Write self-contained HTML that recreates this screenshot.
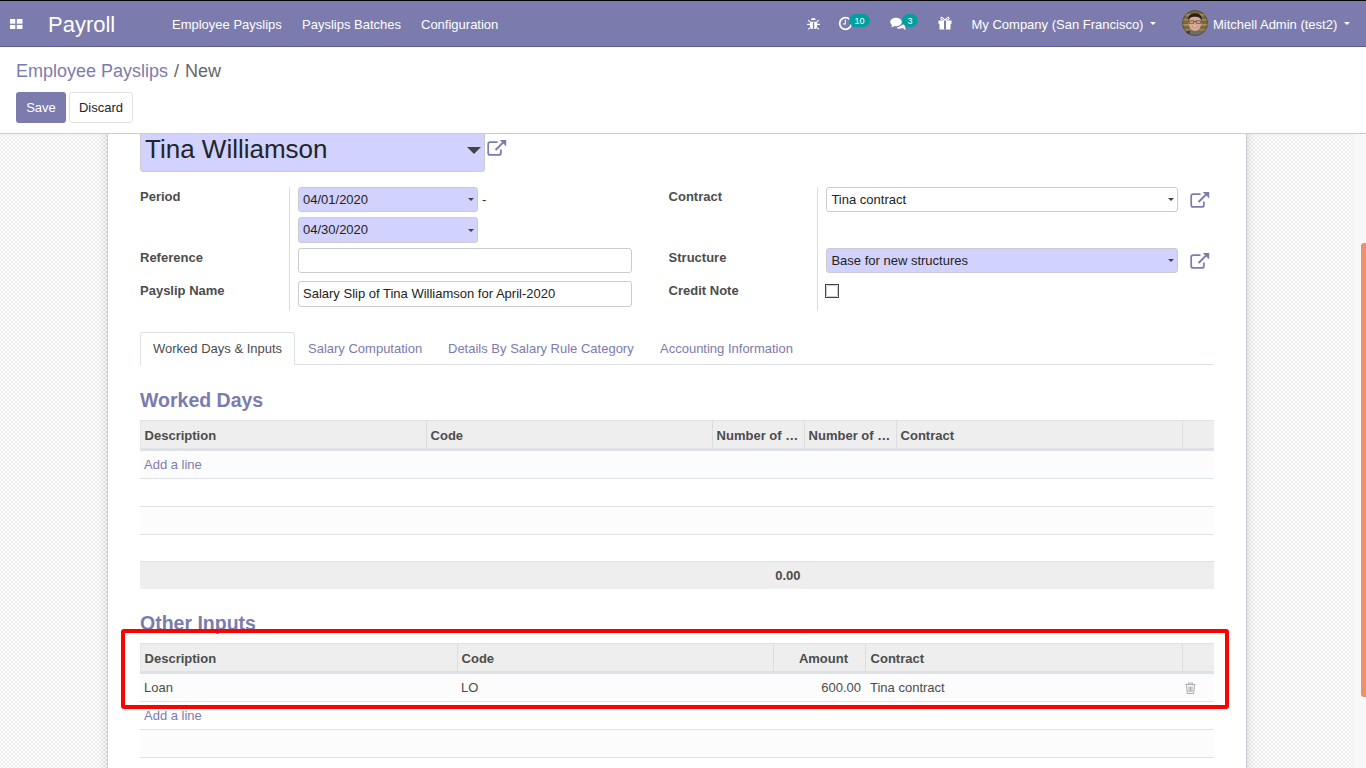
<!DOCTYPE html>
<html><head><meta charset="utf-8">
<style>
*{box-sizing:border-box;margin:0;padding:0}
html,body{width:1366px;height:768px;overflow:hidden;font-family:"Liberation Sans",sans-serif;font-size:13px;color:#4c4c4c;background:#fff}
.abs{position:absolute}
#topline{left:0;top:0;width:1366px;height:1px;background:#000}
#nav{left:0;top:1px;width:1366px;height:46px;background:#7c7bad;border-bottom:1px solid #5f5e97;color:#fff}
#nav .t{position:absolute;white-space:nowrap;color:#fff}
#cp{left:0;top:47px;width:1366px;height:87px;background:#fff;border-bottom:1px solid #ccc}
#content{left:0;top:0;width:1354px;height:768px;clip-path:inset(134px 0 0 0);background-color:#f4f4f4;
 background-image:repeating-conic-gradient(#ebebeb 0 25%, #fefefe 0 50%);background-size:4px 4px;background-position:1px 1px;overflow:hidden}
#scroll{left:1354px;top:134px;width:12px;height:634px;background:#f8f8f8}
#thumb{left:1361px;top:243px;width:5px;height:454px;background:#f0906a;border-radius:3px 0 0 3px}
#sheet{left:107px;top:0;width:1140px;height:900px;box-shadow:0 0 10px rgba(0,0,0,0.12);background:#fff;border-left:1px solid #cbcbd6;border-right:1px solid #cbcbd6}
.lbl{position:absolute;font-weight:bold;color:#4c4c4c;white-space:nowrap}
.inp{position:absolute;border:1px solid #ccc;border-radius:3px;background:#fff;color:#222;padding-left:4px;white-space:nowrap;overflow:hidden}
.req{background:#d2d2ff}
.vsep{position:absolute;width:1px;background:#ddd}
.caret{position:absolute;width:0;height:0;border-left:3px solid transparent;border-right:3px solid transparent;border-top:3px solid #444}
.ext{position:absolute}
.tab{position:absolute;white-space:nowrap;color:#7c7bad}
h2.sec{position:absolute;font-size:19.5px;font-weight:bold;color:#7c7bad;white-space:nowrap}
.tbl{position:absolute}
.th{position:absolute;background:#eee;border-bottom:3px solid #dee2e6;border-left:1px solid #e6e8ea}
.thc{position:absolute;font-weight:bold;white-space:nowrap;color:#4c4c4c;margin-left:0.6px}
.tcol{position:absolute;width:1px;background:#ddd}
.row{position:absolute;border-bottom:1px solid #dee2e6}
.odd{background:#fcfcfc}
.link{color:#7c7bad}
</style></head><body>
<div id="topline" class="abs"></div>
<div id="nav" class="abs">
  <svg class="abs" style="left:10px;top:17.8px" width="12.5" height="10.6" viewBox="0 0 12.5 10.6"><rect x="0" y="0" width="5.3" height="4.7" fill="#fff"/><rect x="6.8" y="0" width="5.7" height="4.7" fill="#fff"/><rect x="0" y="5.9" width="5.3" height="4.7" fill="#fff"/><rect x="6.8" y="5.9" width="5.7" height="4.7" fill="#fff"/></svg>
  <div class="t" style="left:48px;top:11px;font-size:22px">Payroll</div>
  <div class="t" style="left:172px;top:16px;font-size:13px">Employee Payslips</div>
  <div class="t" style="left:302px;top:16px;font-size:13px">Payslips Batches</div>
  <div class="t" style="left:421px;top:16px;font-size:13px">Configuration</div>
  <!-- bug -->
  <svg class="abs" style="left:807px;top:16px" width="13" height="14" viewBox="0 0 13 14">
    <path d="M4 3Q4 0.9 6.35 0.9Q8.7 0.9 8.7 3Z" fill="#fff"/>
    <path d="M3 4.8H10V9.5Q10 12.1 6.5 12.1Q3 12.1 3 9.5Z" fill="#fff"/>
    <rect x="5.9" y="5.3" width="1.3" height="7" fill="#7c7bad"/>
    <path d="M1.2 3.2L3.2 4.9M11.8 3.2L9.8 4.9M0.1 7.4H3M12.9 7.4H10M1.2 12.3L3.2 10.9M11.8 12.3L9.8 10.9" stroke="#fff" stroke-width="1.1"/>
  </svg>
  <!-- clock -->
  <svg class="abs" style="left:838px;top:15px" width="15" height="15" viewBox="0 0 15 15">
    <circle cx="7.5" cy="7.5" r="5.8" fill="none" stroke="#fff" stroke-width="1.7"/>
    <path d="M7.3 3.8V8H4.8" fill="none" stroke="#fff" stroke-width="1.1"/>
  </svg>
  <div class="abs" style="left:849px;top:13px;width:21px;height:13px;border-radius:7px;background:#00a09d;color:#fff;font-size:9px;line-height:14px;text-align:center">10</div>
  <!-- comments -->
  <svg class="abs" style="left:890px;top:16px" width="16" height="14" viewBox="0 0 16 14">
    <ellipse cx="6" cy="5" rx="5.8" ry="4.2" fill="#fff"/>
    <path d="M2 7.5L1.5 10.5L5.5 8.5Z" fill="#fff"/>
    <path d="M7 11Q10.5 11.5 13 10.5L15 12.5L14.5 9.5Q15.8 8 15.3 6.3" fill="#fff" stroke="#fff" stroke-width="1"/>
  </svg>
  <div class="abs" style="left:902px;top:13px;width:16px;height:13px;border-radius:7px;background:#00a09d;color:#fff;font-size:9px;line-height:14px;text-align:center">3</div>
  <!-- gift -->
  <svg class="abs" style="left:938px;top:15px" width="14" height="14" viewBox="0 0 14 14">
    <path d="M7 4.5Q4 0 3 2Q2.3 4 7 4.5Q11.7 4 11 2Q10 0 7 4.5" fill="none" stroke="#fff" stroke-width="1.1"/>
    <rect x="0.5" y="4.5" width="13" height="3.5" fill="#fff"/>
    <rect x="1.5" y="8" width="11" height="5.5" fill="#fff"/>
    <rect x="6" y="4.5" width="2" height="9" fill="#7c7bad"/>
  </svg>
  <div class="abs" style="left:1150px;top:21px;width:0;height:0;border-left:3px solid transparent;border-right:3px solid transparent;border-top:3.5px solid #fff"></div>
  <!-- avatar -->
  <svg class="abs" style="left:1182px;top:9px" width="26" height="26" viewBox="0 0 26 26">
    <defs><clipPath id="av"><circle cx="13" cy="13" r="12.8"/></clipPath></defs>
    <g clip-path="url(#av)">
      <rect width="26" height="26" fill="#7a6840"/>
      <rect x="0" y="4" width="26" height="1.6" fill="#a8935e"/>
      <rect x="0" y="9" width="26" height="1.6" fill="#9c8753"/>
      <rect x="0" y="14" width="26" height="1.6" fill="#a8935e"/>
      <rect x="0" y="19" width="26" height="1.6" fill="#9c8753"/>
      <path d="M2 26Q3 19.5 12.5 20Q22 19.5 24 26Z" fill="#6a6d68"/>
      <path d="M2 26Q3 21 8 20.5L7.5 26Z" fill="#4a3a2c"/>
      <ellipse cx="13" cy="13" rx="6.3" ry="8" fill="#d9a88f"/>
      <path d="M6.3 11Q5.5 3 13 3.2Q20.5 3 19.7 11Q18.5 6.5 13 6.8Q7.5 6.5 6.3 11Z" fill="#2a201a"/>
      <path d="M7.3 10.8H11.8V13.3H7.3ZM14.2 10.8H18.7V13.3H14.2ZM11.8 11.4H14.2" fill="none" stroke="#3a3030" stroke-width="0.6"/>
      <path d="M10.3 16.3Q13 18.5 15.7 16.3Z" fill="#f4eeee"/>
      <path d="M10.1 16.1Q13 19 15.9 16.1" fill="none" stroke="#a85c55" stroke-width="0.6"/>
    </g>
    <circle cx="13" cy="13" r="12.5" fill="none" stroke="#3d3020" stroke-width="0.8" opacity="0.6"/>
  </svg>
  <div class="abs" style="left:1344px;top:21px;width:0;height:0;border-left:3px solid transparent;border-right:3px solid transparent;border-top:3.5px solid #fff"></div>
  <div class="t" style="left:971.5px;top:16px;font-size:13px">My Company (San Francisco)</div>
  <div class="t" style="left:1213px;top:16px;font-size:13px">Mitchell Admin (test2)</div>
</div>
<div id="cp" class="abs">
  <div class="abs" style="left:16px;top:14px;font-size:18px;white-space:nowrap"><span style="color:#7c7bad">Employee Payslips</span><span style="color:#666;padding-left:1px"> /</span><span style="color:#666;padding-left:1px"> New</span></div>
  <div class="abs" style="left:16px;top:45px;width:50px;height:31px;background:#7c7bad;border-radius:3px;color:#fff;text-align:center;line-height:31px">Save</div>
  <div class="abs" style="left:69px;top:45px;width:64px;height:31px;background:#fff;border:1px solid #dee2e6;border-radius:3px;color:#212529;text-align:center;line-height:29px">Discard</div>
</div>
<div id="content" class="abs">
  <div id="sheet" class="abs"></div>
  <!-- name field -->
  <div class="inp req" style="left:140px;top:120px;width:345px;height:52px;font-size:26px;line-height:56px;padding-left:4px;color:#212529">Tina Williamson</div>
  <div class="caret" style="left:467px;top:147px;border-left-width:7px;border-right-width:7px;border-top-width:7px;border-top-color:#444"></div>
  <svg class="ext" style="left:487px;top:140px" width="20" height="16" viewBox="0 0 20 16"><path d="M10.5 2.2H3.2Q1.2 2.2 1.2 4.2V12.9Q1.2 14.9 3.2 14.9H11.9Q13.9 14.9 13.9 12.9V9.5" fill="none" stroke="#7c7bad" stroke-width="1.7"/><path d="M8.6 10L16.2 2.4" stroke="#7c7bad" stroke-width="2"/><path d="M12.6 -0.2H19.2V6.6Z" fill="#7c7bad"/></svg>

  <!-- left group -->
  <div class="lbl" style="left:140px;top:189px">Period</div>
  <div class="lbl" style="left:140px;top:250px">Reference</div>
  <div class="lbl" style="left:140px;top:283px">Payslip Name</div>
  <div class="vsep" style="left:289px;top:187px;height:124px"></div>
  <div class="inp req" style="left:298px;top:187px;width:180px;height:25px;line-height:23px">04/01/2020</div>
  <div class="caret" style="left:468px;top:198px"></div>
  <div class="abs" style="left:482px;top:192px;color:#333">-</div>
  <div class="inp req" style="left:298px;top:217px;width:180px;height:26px;line-height:23px">04/30/2020</div>
  <div class="caret" style="left:468px;top:229px"></div>
  <div class="inp" style="left:298px;top:248px;width:334px;height:25px"></div>
  <div class="inp" style="left:298px;top:281px;width:334px;height:26px;line-height:24px">Salary Slip of Tina Williamson for April-2020</div>

  <!-- right group -->
  <div class="lbl" style="left:668.6px;top:189px">Contract</div>
  <div class="lbl" style="left:668.6px;top:250px">Structure</div>
  <div class="lbl" style="left:668.6px;top:283px">Credit Note</div>
  <div class="vsep" style="left:817px;top:187px;height:124px"></div>
  <div class="inp" style="left:826px;top:187px;width:352px;height:25px;line-height:23px;padding-left:4.4px">Tina contract</div>
  <div class="caret" style="left:1168px;top:198px"></div>
  <svg class="ext" style="left:1190px;top:192px" width="20" height="16" viewBox="0 0 20 16"><path d="M10.5 2.2H3.2Q1.2 2.2 1.2 4.2V12.9Q1.2 14.9 3.2 14.9H11.9Q13.9 14.9 13.9 12.9V9.5" fill="none" stroke="#7c7bad" stroke-width="1.7"/><path d="M8.6 10L16.2 2.4" stroke="#7c7bad" stroke-width="2"/><path d="M12.6 -0.2H19.2V6.6Z" fill="#7c7bad"/></svg>
  <div class="inp req" style="left:826px;top:248px;width:352px;height:25px;line-height:23px;padding-left:4.4px">Base for new structures</div>
  <div class="caret" style="left:1168px;top:259px"></div>
  <svg class="ext" style="left:1190px;top:253px" width="20" height="16" viewBox="0 0 20 16"><path d="M10.5 2.2H3.2Q1.2 2.2 1.2 4.2V12.9Q1.2 14.9 3.2 14.9H11.9Q13.9 14.9 13.9 12.9V9.5" fill="none" stroke="#7c7bad" stroke-width="1.7"/><path d="M8.6 10L16.2 2.4" stroke="#7c7bad" stroke-width="2"/><path d="M12.6 -0.2H19.2V6.6Z" fill="#7c7bad"/></svg>
  <div class="abs" style="left:825px;top:284px;width:14px;height:14px;border:1px solid #444;background:#fff"><div style="width:12px;height:12px;border:1px solid #c8ced6;border-radius:2px"></div></div>

  <!-- tabs -->
  <div class="abs" style="left:140px;top:364px;width:1074px;height:1px;background:#dee2e6"></div>
  <div class="abs" style="left:140px;top:332px;width:155px;height:33px;background:#fff;border:1px solid #dee2e6;border-bottom:none;border-radius:3px 3px 0 0"></div>
  <div class="tab" style="left:153px;top:341px;color:#4c4c4c">Worked Days &amp; Inputs</div>
  <div class="tab" style="left:308px;top:341px">Salary Computation</div>
  <div class="tab" style="left:448px;top:341px">Details By Salary Rule Category</div>
  <div class="tab" style="left:660px;top:341px">Accounting Information</div>

  <!-- worked days -->
  <h2 class="sec" style="left:140px;top:389px">Worked Days</h2>
  <div class="th" style="left:140px;top:420px;width:1074px;height:31px;border-top:1px solid #dee2e6"></div>
  <div class="tcol" style="left:426px;top:421px;height:27px"></div>
  <div class="tcol" style="left:712px;top:421px;height:27px"></div>
  <div class="tcol" style="left:804px;top:421px;height:27px"></div>
  <div class="tcol" style="left:896px;top:421px;height:27px"></div>
  <div class="tcol" style="left:1182px;top:421px;height:27px"></div>
  <div class="thc" style="left:144px;top:428px">Description</div>
  <div class="thc" style="left:430px;top:428px">Code</div>
  <div class="thc" style="left:716px;top:428px">Number of …</div>
  <div class="thc" style="left:808px;top:428px">Number of …</div>
  <div class="thc" style="left:900px;top:428px">Contract</div>
  <div class="row odd" style="left:140px;top:451px;width:1074px;height:28px"></div>
  <div class="abs link" style="left:144px;top:457px">Add a line</div>
  <div class="row" style="left:140px;top:479px;width:1074px;height:28px"></div>
  <div class="row odd" style="left:140px;top:507px;width:1074px;height:28px"></div>
  <div class="row" style="left:140px;top:535px;width:1074px;height:27px"></div>
  <div class="abs" style="left:140px;top:562px;width:1074px;height:27px;background:#eee"></div>
  <div class="thc" style="left:740px;top:568px;width:60px;text-align:right">0.00</div>

  <!-- other inputs -->
  <h2 class="sec" style="left:140px;top:612px">Other Inputs</h2>
  <div class="th" style="left:140px;top:643px;width:1074px;height:31px;border-top:1px solid #dee2e6"></div>
  <div class="tcol" style="left:457px;top:644px;height:27px"></div>
  <div class="tcol" style="left:773px;top:644px;height:27px"></div>
  <div class="tcol" style="left:865px;top:644px;height:27px"></div>
  <div class="tcol" style="left:1182px;top:644px;height:27px"></div>
  <div class="thc" style="left:144px;top:651px">Description</div>
  <div class="thc" style="left:461px;top:651px">Code</div>
  <div class="thc" style="left:747.4px;top:651px;width:100px;text-align:right">Amount</div>
  <div class="thc" style="left:870px;top:651px">Contract</div>
  <div class="row odd" style="left:140px;top:674px;width:1074px;height:28px"></div>
  <div class="abs" style="left:144px;top:680px;color:#4c4c4c">Loan</div>
  <div class="abs" style="left:461px;top:680px;color:#4c4c4c">LO</div>
  <div class="abs" style="left:761px;top:680px;width:100px;text-align:right;color:#4c4c4c">600.00</div>
  <div class="abs" style="left:870px;top:680px;color:#4c4c4c">Tina contract</div>
  <svg class="abs" style="left:1185px;top:682px" width="11" height="12" viewBox="0 0 11 12"><path d="M0.5 2.5H10.5M3.5 2.5V1H7.5V2.5M1.5 2.5L2.3 11.5H8.7L9.5 2.5M4 4.5V10M5.5 4.5V10M7 4.5V10" fill="none" stroke="#aaa" stroke-width="1"/></svg>
  <div class="row" style="left:140px;top:702px;width:1074px;height:28px"></div>
  <div class="abs link" style="left:144px;top:708px">Add a line</div>
  <div class="row odd" style="left:140px;top:730px;width:1074px;height:28px"></div>

  <!-- red highlight -->
  <div class="abs" style="left:121px;top:629px;width:1108px;height:80px;border:4px solid #f00;border-radius:3px"></div>
</div>
<div id="scroll" class="abs"></div>
<div id="thumb" class="abs"></div>
</body></html>
